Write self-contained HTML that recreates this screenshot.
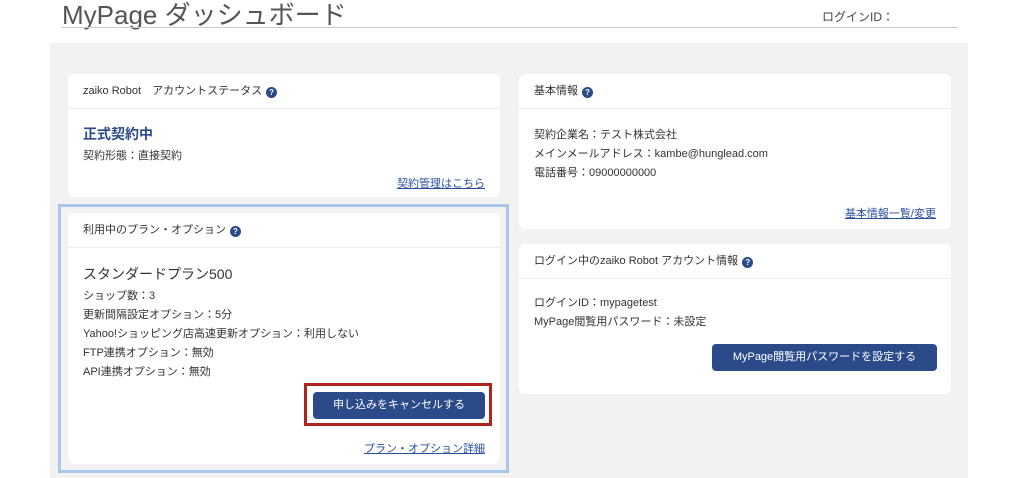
<!DOCTYPE html>
<html><head><meta charset="utf-8"><style>
*{box-sizing:border-box;margin:0;padding:0}
body{width:1024px;height:478px;background:#fff;font-family:"Liberation Sans","Noto Sans CJK JP",sans-serif;color:#333;position:relative;overflow:hidden;font-size:11px}
.title{position:absolute;left:62px;top:0;font-size:26px;color:#555;line-height:30px}
.uline{position:absolute;left:62px;top:27px;width:896px;height:1px;background:#ccc}
.lid{position:absolute;left:822px;top:8px;font-size:12px;color:#444}
.panel{position:absolute;left:50px;top:43px;width:918px;height:435px;background:#f2f2f2}
.card{position:absolute;background:#fff;border-radius:6px}
.hd{height:35px;border-bottom:1px solid #eee;padding:0 15px;line-height:35px;font-size:11px;color:#333}
.q{display:inline-block;width:11px;height:11px;border-radius:50%;background:#2b4a8a;color:#fff;font-size:8px;line-height:11px;text-align:center;font-weight:bold;vertical-align:-1px;margin-left:4px}
.bd{padding:0 15px;position:relative}
.ln{font-size:11px;line-height:19px;color:#333}
a{color:#2b4fa0;text-decoration:underline;font-size:11px;position:absolute;right:15px}
.btn{position:absolute;background:#2b4a8a;color:#fff;border-radius:4px;font-size:11px;text-align:center}
</style></head><body>
<div class="title">MyPage ダッシュボード</div>
<div class="uline"></div>
<div class="lid">ログインID：</div>
<div class="panel"></div>

<div class="card" style="left:68px;top:74px;width:432px;height:123px">
 <div class="hd">zaiko Robot　アカウントステータス<span class="q">?</span></div>
 <div class="bd">
  <div style="color:#2b4a8a;font-size:14px;font-weight:bold;padding-top:16px;line-height:18px">正式契約中</div>
  <div class="ln" style="margin-top:4px">契約形態：直接契約</div>
  <a style="top:66px">契約管理はこちら</a>
 </div>
</div>

<div style="position:absolute;left:58px;top:204px;width:451px;height:269px;border:3px solid #a9c7e8"></div>
<div class="card" style="left:68px;top:213px;width:432px;height:251px">
 <div class="hd">利用中のプラン・オプション<span class="q">?</span></div>
 <div class="bd">
  <div style="font-size:14px;padding-top:17px;line-height:18px;color:#333">スタンダードプラン500</div>
  <div style="margin-top:4px">
  <div class="ln">ショップ数：3</div>
  <div class="ln">更新間隔設定オプション：5分</div>
  <div class="ln">Yahoo!ショッピング店高速更新オプション：利用しない</div>
  <div class="ln">FTP連携オプション：無効</div>
  <div class="ln">API連携オプション：無効</div>
  </div>
 </div>
 <a style="top:227px;right:15px">プラン・オプション詳細</a>
</div>
<div style="position:absolute;left:304px;top:383px;width:188px;height:43px;border:3px solid #b0241e"></div>
<div class="btn" style="left:313px;top:392px;width:172px;height:27px;line-height:27px">申し込みをキャンセルする</div>

<div class="card" style="left:519px;top:74px;width:432px;height:155px">
 <div class="hd">基本情報<span class="q">?</span></div>
 <div class="bd" style="padding-top:17px">
  <div class="ln">契約企業名：テスト株式会社</div>
  <div class="ln">メインメールアドレス：kambe@hunglead.com</div>
  <div class="ln">電話番号：09000000000</div>
  <a style="top:96px">基本情報一覧/変更</a>
 </div>
</div>

<div class="card" style="left:519px;top:244px;width:432px;height:150px">
 <div class="hd">ログイン中のzaiko Robot アカウント情報<span class="q">?</span></div>
 <div class="bd" style="padding-top:15px">
  <div class="ln">ログインID：mypagetest</div>
  <div class="ln">MyPage閲覧用パスワード：未設定</div>
 </div>
</div>
<div class="btn" style="left:712px;top:344px;width:225px;height:27px;line-height:27px">MyPage閲覧用パスワードを設定する</div>
</body></html>
